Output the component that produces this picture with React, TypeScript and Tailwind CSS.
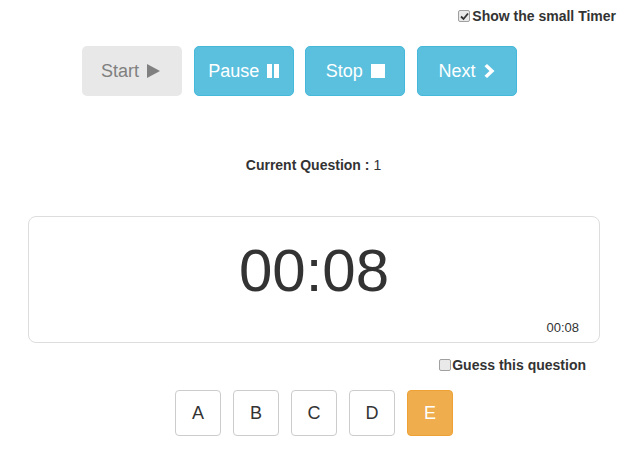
import React from "react";

const font = { fontFamily: '"Liberation Sans", Arial, sans-serif' };

function Play() {
  return (
    <svg width="13" height="14" viewBox="0 0 13 14" className="block">
      <path d="M0 0 L13 7 L0 14 Z" fill="currentColor" />
    </svg>
  );
}
function PauseIcon() {
  return (
    <svg width="12" height="14" viewBox="0 0 12 14" className="block">
      <rect x="0" y="0" width="5" height="14" fill="currentColor" />
      <rect x="7" y="0" width="5" height="14" fill="currentColor" />
    </svg>
  );
}
function StopIcon() {
  return (
    <svg width="14" height="14" viewBox="0 0 14 14" className="block">
      <rect x="0" y="0" width="14" height="14" fill="currentColor" />
    </svg>
  );
}
function Chevron() {
  return (
    <svg width="12" height="14" viewBox="0 0 12 14" className="block">
      <path d="M1.5 2.2 L4 0 L11.5 7 L4 14 L1.5 11.8 L6.5 7 Z" fill="currentColor" />
    </svg>
  );
}

function Btn({
  label,
  icon,
  disabled,
}: {
  label: string;
  icon: React.ReactNode;
  disabled?: boolean;
}) {
  return (
    <div
      className={
        disabled
          ? "w-[100px] h-[50px] rounded-[5px] bg-[#e8e8e8] text-[#808080] flex items-center justify-center gap-[8px] text-[18px] pr-[3px]"
          : "w-[100px] h-[50px] rounded-[5px] bg-[#5bc0de] border border-[#46b8da] text-white flex items-center justify-center gap-[8px] text-[18px]"
      }
    >
      <span>{label}</span>
      {icon}
    </div>
  );
}

function Letter({ l, active }: { l: string; active?: boolean }) {
  return (
    <div
      className={
        active
          ? "w-[46px] h-[46px] rounded-[4px] bg-[#f0ad4e] border border-[#eea236] text-white flex items-center justify-center text-[18px]"
          : "w-[46px] h-[46px] rounded-[4px] bg-white border border-[#cccccc] text-[#333333] flex items-center justify-center text-[18px]"
      }
    >
      {l}
    </div>
  );
}

function Check({ checked }: { checked?: boolean }) {
  return (
    <span className="w-[12px] h-[12px] rounded-[2px] border border-[#a0a0a0] bg-[#e9e9e9] flex items-center justify-center">
      {checked && (
        <svg width="9" height="9" viewBox="0 0 9 9" className="block">
          <path d="M1 4.5 L3.5 7 L8 1.5" stroke="#333" strokeWidth="1.8" fill="none" />
        </svg>
      )}
    </span>
  );
}

export default function App() {
  return (
    <div className="w-[625px] h-[452px] bg-white text-[#333333] relative" style={font}>
      <div className="flex justify-end pr-[9px] pt-[8px]">
        <div className="flex items-center text-[14px] font-bold leading-[16px]">
          <Check checked />
          <span className="ml-[2px]">Show the small Timer</span>
        </div>
      </div>

      <div className="flex pl-[82px] gap-[11.67px] mt-[22px]">
        <Btn label="Start" icon={<Play />} disabled />
        <Btn label="Pause" icon={<PauseIcon />} />
        <Btn label="Stop" icon={<StopIcon />} />
        <Btn label="Next" icon={<Chevron />} />
      </div>

      <div className="flex justify-center pl-[2px] mt-[61px] text-[14px] leading-[16px]">
        <span className="font-bold">Current Question :</span>
        <span className="ml-[4px] text-[#333333]">1</span>
      </div>

      <div className="mx-[28px] mr-[25px] mt-[43px] h-[127px] border border-[#dddddd] rounded-[8px] flex flex-col">
        <div className="flex justify-center pt-[19px] text-[60px] leading-[70px]">00:08</div>
        <div className="flex justify-end pr-[20px] mt-[14px] text-[13px] leading-[15px]">00:08</div>
      </div>

      <div className="flex justify-end pr-[39px] mt-[14px]">
        <div className="flex items-center text-[14px] font-bold leading-[16px]">
          <Check />
          <span className="ml-[1px]">Guess this question</span>
        </div>
      </div>

      <div className="flex pl-[175px] gap-[12px] mt-[17px]">
        <Letter l="A" />
        <Letter l="B" />
        <Letter l="C" />
        <Letter l="D" />
        <Letter l="E" active />
      </div>
    </div>
  );
}
